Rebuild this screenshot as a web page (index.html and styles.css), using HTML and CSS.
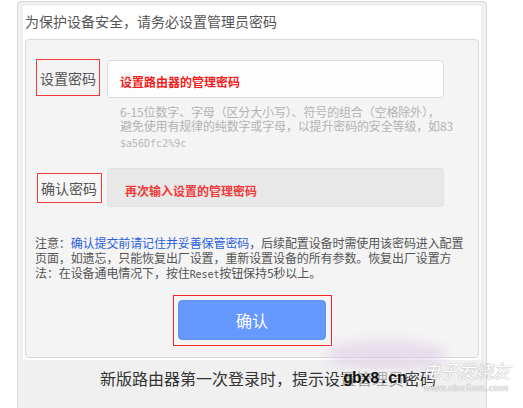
FILE: index.html
```html
<!DOCTYPE html>
<html lang="zh">
<head>
<meta charset="utf-8">
<title>设置管理员密码</title>
<link rel="stylesheet" href="styles.css">
</head>
<body>
<div class="frame">
  <div class="panel">
    <div class="title">为保护设备安全，请务必设置管理员密码</div>
    <div class="box">
      <div class="row row1">
        <div class="label label1">设置密码</div>
        <div class="input input1"><span class="ph">设置路由器的管理密码</span></div>
      </div>
      <div class="hint">
        <div class="hint-text">6-15位数字、字母（区分大小写）、符号的组合（空格除外），</div>
        <div class="hint-text">避免使用有规律的纯数字或字母，以提升密码的安全等级，如83</div>
        <div class="hint-code">$a56Dfc2%9c</div>
      </div>
      <div class="row row2">
        <div class="label label2">确认密码</div>
        <div class="input input2"><span class="ph ph2">再次输入设置的管理密码</span></div>
      </div>
      <p class="note">注意：<span class="link">确认提交前请记住并妥善保管密码</span>，后续配置设备时需使用该密码进入配置<br>页面，如遗忘，只能恢复出厂设置，重新设置设备的所有参数。恢复出厂设置方<br>法：在设备通电情况下，按住<span class="mono">Reset</span>按钮保持5秒以上。</p>
      <div class="btn-wrap">
        <div class="btn">确认</div>
      </div>
    </div>
  </div>
  <div class="caption">新版路由器第一次登录时，提示设置管理员密码</div>
  <div class="smudge"></div>
  <div class="wm-site">gbx8.cn</div>
  <div class="wm-logo">
    <div class="wm-cn">电子发烧友</div>
    <div class="wm-url">www.elecfans.com</div>
  </div>
</div>
</body>
</html>
```

FILE: styles.css
```css
html, body {
  margin: 0;
  padding: 0;
  height: 408px;
  overflow: hidden;
  background: #ffffff;
  font-family: "Noto Sans CJK SC", "Noto Sans", sans-serif;
}

.frame {
  position: relative;
  margin: 1px 0 0 17px;
  width: 470px;
  height: 407px;
  box-sizing: border-box;
  border: 1px solid #d9d9d9;
  border-bottom: none;
  border-radius: 4px 4px 0 0;
  background: #f0f0f0;
  padding: 4px 5px 0 5px;
}

.panel {
  background: #ffffff;
  padding: 0 2px 2px 2px;
}

.title {
  height: 33px;
  line-height: 30px;
  font-size: 14px;
  color: #555555;
}

.box {
  height: 319px;
  box-sizing: border-box;
  border: 1px solid #d8d8d8;
  border-radius: 4px;
  background: #f4f4f4;
  padding: 19px 0 0 10px;
}

.row {
  display: flex;
  align-items: flex-start;
}

.label {
  box-sizing: border-box;
  border: 1px solid #ee3a3a;
  font-size: 14px;
  color: #555555;
  display: flex;
  align-items: center;
  padding-left: 3px;
  white-space: nowrap;
}

.label1 {
  width: 64px;
  height: 37px;
}

.label2 {
  width: 65px;
  height: 30px;
  margin: 5px 0 0 1px;
  background: #f7f7f7;
}

.input {
  box-sizing: border-box;
  width: 337px;
  border-radius: 3px;
  display: flex;
  align-items: center;
}

.input1 {
  height: 38px;
  margin: 1px 0 0 7px;
  background: #fdfdfd;
  border: 1px solid #dcdcdc;
  padding: 4px 0 0 12px;
}

.input2 {
  height: 39px;
  margin-left: 5px;
  background: #e8e8e8;
  border: 1px solid #e2e2e2;
  padding: 5px 0 0 17px;
}

.ph {
  font-size: 12px;
  font-weight: bold;
  color: #f21c1c;
}

.ph2 {
  color: #f03a3a;
}

.hint {
  margin: 7px 0 0 84px;
  color: #b3b3b3;
  font-size: 12px;
}

.hint-text {
  height: 14px;
  line-height: 14px;
  white-space: nowrap;
  letter-spacing: -0.15px;
}

.hint-code {
  margin-top: 4px;
  line-height: 14px;
  font-family: "DejaVu Sans Mono", "Liberation Mono", monospace;
  font-size: 10px;
  color: #b8b8b8;
}

.row2 {
  margin-top: 17px;
}

.note {
  margin: 28px 0 0 -1px;
  font-size: 12px;
  line-height: 15px;
  color: #555555;
  white-space: nowrap;
  letter-spacing: -0.1px;
}

.link {
  color: #2a5fe0;
}

.mono {
  font-family: "DejaVu Sans Mono", "Liberation Mono", monospace;
  font-size: 10px;
}

.btn-wrap {
  box-sizing: border-box;
  width: 159px;
  height: 51px;
  margin: 13px 0 0 137px;
  border: 1px solid #f02828;
  padding: 4px 5px 5px 4px;
}

.btn {
  height: 40px;
  box-sizing: border-box;
  border-radius: 4px;
  background: #6699ff;
  border: 1px solid #5f91f6;
  color: #ffffff;
  font-size: 16px;
  display: flex;
  align-items: center;
  justify-content: center;
}

.caption {
  margin: 8px 0 0 77px;
  font-size: 16px;
  line-height: 20px;
  color: #333333;
  white-space: nowrap;
}

.smudge {
  position: absolute;
  left: 308px;
  top: 338px;
  width: 120px;
  height: 30px;
  border-radius: 50%;
  background: rgba(215, 190, 225, 0.45);
  filter: blur(6px);
}

.wm-site {
  position: absolute;
  left: 325px;
  top: 367px;
  font-family: "Liberation Mono", "DejaVu Sans Mono", monospace;
  font-weight: bold;
  font-size: 16px;
  line-height: 20px;
  color: #111111;
  background: rgba(240, 240, 240, 0.6);
  letter-spacing: -0.6px;
}

.wm-logo {
  position: absolute;
  left: 396px;
  top: 356px;
  width: 104px;
  text-align: center;
}

.wm-cn {
  font-size: 18px;
  line-height: 24px;
  font-style: italic;
  color: #ffffff;
  text-shadow: 0 0 1px #aaaaaa, 0 0 1px #aaaaaa;
  letter-spacing: -0.5px;
}

.wm-url {
  font-family: "DejaVu Sans", sans-serif;
  font-size: 9px;
  line-height: 12px;
  color: #ffffff;
  text-shadow: 0 0 1px #999999, 0 0 1px #999999;
}
```
